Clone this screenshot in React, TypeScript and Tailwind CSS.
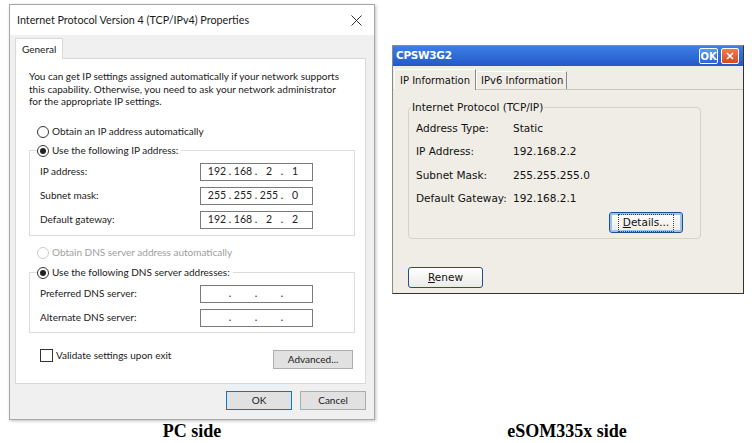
import React from "react";

const segoe = { fontFamily: 'Lato, "Noto Sans", sans-serif' };

function Radio({ checked, disabled }: { checked?: boolean; disabled?: boolean }) {
  return (
    <span
      className={`w-[12px] h-[12px] rounded-full border flex items-center justify-center bg-white ${
        disabled ? "border-[#cccccc]" : "border-[#333333]"
      }`}
    >
      {checked && <span className="w-[6px] h-[6px] rounded-full bg-[#222222]" />}
    </span>
  );
}

function IpBox({ parts }: { parts: string[] }) {
  return (
    <div className="w-[113px] h-[18px] border border-[#7a7a7a] bg-white flex items-center pl-[6px] text-[10.5px] text-[#222]">
      {parts.map((p, i) => (
        <React.Fragment key={i}>
          <span className="w-[20px] text-center">{p}</span>
          {i < 3 && <span className="w-[6px] text-center">.</span>}
        </React.Fragment>
      ))}
    </div>
  );
}

function FieldRow({ label, parts }: { label: string; parts: string[] }) {
  return (
    <div className="flex items-center h-[18px]">
      <span className="w-[170px] pl-[10px]">{label}</span>
      <IpBox parts={parts} />
    </div>
  );
}

function WinDialog() {
  return (
    <div
      className="ml-[9px] mt-[4px] w-[366px] h-[416px] border border-[#a8a8a8] bg-[#f0f0f0] flex flex-col shadow-[1px_1px_3px_rgba(0,0,0,0.25)] text-[#1a1a1a]"
      style={segoe}
    >
      {/* title bar */}
      <div className="h-[30px] bg-white flex items-center justify-between pl-[7px] pr-[12px] text-[10.75px]">
        <span>Internet Protocol Version 4 (TCP/IPv4) Properties</span>
        <svg width="11" height="11" viewBox="0 0 11 11">
          <path d="M0.5 0.5 L10.5 10.5 M10.5 0.5 L0.5 10.5" stroke="#333" strokeWidth="1" />
        </svg>
      </div>

      {/* tab */}
      <div className="mt-[3px] ml-[5px] flex">
        <div className="h-[21px] px-[6px] flex items-center text-[10px] bg-white border border-b-0 border-[#d9d9d9] -mb-px relative z-10">
          General
        </div>
      </div>

      {/* panel */}
      <div className="ml-[5px] w-[351px] h-[326px] bg-white border border-[#d9d9d9] text-[10px] flex flex-col">
        <p className="mt-[11px] pl-[13px] leading-[12.5px] whitespace-nowrap">
          You can get IP settings assigned automatically if your network supports
          <br />
          this capability. Otherwise, you need to ask your network administrator
          <br />
          for the appropriate IP settings.
        </p>

        <div className="mt-[17px] pl-[21px] flex items-center gap-[3px] h-[14px]">
          <Radio />
          <span>Obtain an IP address automatically</span>
        </div>

        <fieldset className="ml-[13px] w-[326px] mt-[5px] border border-[#dcdcdc] pb-[6px]">
          <legend className="ml-[7px] pr-[3px] flex items-center gap-[3px] h-[14px]">
            <Radio checked />
            <span>Use the following IP address:</span>
          </legend>
          <div className="pt-[5px] flex flex-col gap-[6px]">
            <FieldRow label="IP address:" parts={["192", "168", "2", "1"]} />
            <FieldRow label="Subnet mask:" parts={["255", "255", "255", "0"]} />
            <FieldRow label="Default gateway:" parts={["192", "168", "2", "2"]} />
          </div>
        </fieldset>

        <div className="mt-[10px] pl-[21px] flex items-center gap-[3px] h-[14px] text-[#a0a0a0]">
          <Radio disabled />
          <span>Obtain DNS server address automatically</span>
        </div>

        <fieldset className="ml-[13px] w-[326px] mt-[6px] border border-[#dcdcdc] pb-[5px]">
          <legend className="ml-[7px] pr-[3px] flex items-center gap-[3px] h-[14px]">
            <Radio checked />
            <span>Use the following DNS server addresses:</span>
          </legend>
          <div className="pt-[5px] flex flex-col gap-[6px]">
            <FieldRow label="Preferred DNS server:" parts={["", "", "", ""]} />
            <FieldRow label="Alternate DNS server:" parts={["", "", "", ""]} />
          </div>
        </fieldset>

        <div className="mt-[16px] pl-[24px] pr-[12px] flex items-start justify-between">
          <div className="flex items-center gap-[3px] h-[14px]">
            <span className="w-[13px] h-[13px] border border-[#333] bg-white" />
            <span>Validate settings upon exit</span>
          </div>
          <button className="mt-[1px] w-[80px] h-[19px] bg-[#e1e1e1] border border-[#adadad]">
            Advanced...
          </button>
        </div>
      </div>

      {/* buttons */}
      <div className="mt-[7px] pr-[8px] flex justify-end gap-[8px] text-[10px]">
        <button className="w-[66px] h-[19px] bg-[#e1e1e1] border border-[#0078d7]">OK</button>
        <button className="w-[66px] h-[19px] bg-[#e1e1e1] border border-[#adadad]">Cancel</button>
      </div>
    </div>
  );
}

const tahoma = { fontFamily: '"DejaVu Sans", Verdana, sans-serif' };

function XpButton({ children, focused, w }: { children: React.ReactNode; focused?: boolean; w: string }) {
  return (
    <button
      className={`${w} h-[21px] rounded-[3px] border border-[#1c4f8c] bg-gradient-to-b from-[#ffffff] to-[#ecebe4] text-[10.5px] text-[#111] flex items-center justify-center ${
        focused ? "shadow-[inset_0_0_0_2px_#9cc2f0]" : ""
      }`}
    >
      <span className={focused ? "px-[4px] border border-dotted border-[#444]" : ""}>{children}</span>
    </button>
  );
}

function CeRow({ label, value }: { label: string; value: string }) {
  return (
    <div className="flex items-center h-[14px]">
      <span className="w-[97px]">{label}</span>
      <span>{value}</span>
    </div>
  );
}

function CeDialog() {
  return (
    <div
      className="ml-[17px] mt-[45px] w-[352px] h-[249px] bg-[#efede5] border border-[#8a8a8a] border-r-[#333] border-b-[#333] flex flex-col text-[10.5px] text-[#111]"
      style={tahoma}
    >
      {/* title bar */}
      <div className="h-[20px] bg-gradient-to-b from-[#3d7ee6] to-[#2359c7] flex items-center justify-between pl-[3px] pr-[4px]">
        <span className="text-white font-bold text-[10.5px] tracking-[-0.3px]">CPSW3G2</span>
        <div className="flex gap-[3px]">
          <span className="w-[19px] h-[16px] rounded-[2px] border border-white bg-gradient-to-b from-[#5b9bf0] to-[#2a64d6] text-white font-bold text-[10px] flex items-center justify-center">
            OK
          </span>
          <span className="w-[18px] h-[16px] rounded-[2px] border border-white bg-gradient-to-b from-[#ee7a50] to-[#d9481f] flex items-center justify-center">
            <svg width="8" height="8" viewBox="0 0 8 8">
              <path d="M1 1 L7 7 M7 1 L1 7" stroke="#fff" strokeWidth="1.6" />
            </svg>
          </span>
        </div>
      </div>

      {/* tabs */}
      <div className="mt-[3px] pl-[1px] flex items-end border-b border-[#c9c7bc] text-[10px] whitespace-nowrap">
        <div className="h-[21px] w-[82px] pl-[5px] flex items-center border border-b-0 border-[#ffffff] border-r-[#8a8a8a] bg-[#efede5] -mb-px relative z-10">
          IP Information
        </div>
        <div className="h-[18px] w-[91px] pl-[4px] flex items-center border border-b-0 border-[#ffffff] border-r-[#8a8a8a]">
          IPv6 Information
        </div>
      </div>

      {/* group */}
      <fieldset className="ml-[15px] w-[293px] mt-[10px] border border-[#d5d3c8] rounded-[4px] pb-[5px]">
        <legend className="ml-[2px] px-[1px]">Internet Protocol (TCP/IP)</legend>
        <div className="pl-[7px] pt-[6px] flex flex-col gap-[9.5px]">
          <CeRow label="Address Type:" value="Static" />
          <CeRow label="IP Address:" value="192.168.2.2" />
          <CeRow label="Subnet Mask:" value="255.255.255.0" />
          <CeRow label="Default Gateway:" value="192.168.2.1" />
        </div>
        <div className="flex justify-end pr-[17px] mt-[6px]">
          <XpButton w="w-[74px]" focused>
            <span className="underline">D</span>etails...
          </XpButton>
        </div>
      </fieldset>

      <div className="ml-[15px] mt-[28px]">
        <XpButton w="w-[75px]">
          <span className="underline">R</span>enew
        </XpButton>
      </div>
    </div>
  );
}

export default function App() {
  return (
    <div className="w-[752px] h-[443px] bg-white flex flex-col overflow-hidden">
      <div className="flex items-start h-[423px]">
        <WinDialog />
        <CeDialog />
      </div>
      <div
        className="flex text-[18px] font-bold text-black leading-[20px] -mt-[2px]"
        style={{ fontFamily: '"Liberation Serif", "Times New Roman", serif' }}
      >
        <div className="w-[384px] text-center">PC side</div>
        <div className="w-[366px] text-center">eSOM335x side</div>
      </div>
    </div>
  );
}
